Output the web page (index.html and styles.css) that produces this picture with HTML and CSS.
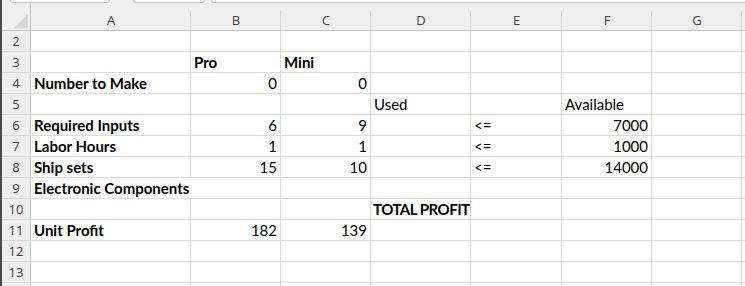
FILE: index.html
```html
<!DOCTYPE html>
<html>
<head>
<meta charset="utf-8">
<link rel="stylesheet" href="styles.css">
</head>
<body>
<div class="app">
  <div class="tabs">
    <div class="tab tab1"></div>
    <div class="tab tab2"></div>
    <div class="tab tab3"></div>
  </div>
  <div class="sheet">
    <div class="corner"><svg width="14" height="14" viewBox="0 0 14 14"><polygon points="14,0 0,14 14,14" fill="#d6d6d6"/></svg></div>
    <div class="colhead">A</div>
    <div class="colhead">B</div>
    <div class="colhead">C</div>
    <div class="colhead">D</div>
    <div class="colhead">E</div>
    <div class="colhead">F</div>
    <div class="colhead">G</div>
    <div class="colhead"></div>

    <div class="rowhead">2</div>
    <div class="cell"></div><div class="cell"></div><div class="cell"></div><div class="cell"></div><div class="cell"></div><div class="cell"></div><div class="cell"></div><div class="cell"></div>

    <div class="rowhead">3</div>
    <div class="cell"></div><div class="cell b">Pro</div><div class="cell b">Mini</div><div class="cell"></div><div class="cell"></div><div class="cell"></div><div class="cell"></div><div class="cell"></div>

    <div class="rowhead">4</div>
    <div class="cell b">Number to Make</div><div class="cell num">0</div><div class="cell num">0</div><div class="cell"></div><div class="cell"></div><div class="cell"></div><div class="cell"></div><div class="cell"></div>

    <div class="rowhead">5</div>
    <div class="cell"></div><div class="cell"></div><div class="cell"></div><div class="cell">Used</div><div class="cell"></div><div class="cell">Available</div><div class="cell"></div><div class="cell"></div>

    <div class="rowhead">6</div>
    <div class="cell b">Required Inputs</div><div class="cell num">6</div><div class="cell num">9</div><div class="cell"></div><div class="cell">&lt;=</div><div class="cell num">7000</div><div class="cell"></div><div class="cell"></div>

    <div class="rowhead">7</div>
    <div class="cell b">Labor Hours</div><div class="cell num">1</div><div class="cell num">1</div><div class="cell"></div><div class="cell">&lt;=</div><div class="cell num">1000</div><div class="cell"></div><div class="cell"></div>

    <div class="rowhead">8</div>
    <div class="cell b">Ship sets</div><div class="cell num">15</div><div class="cell num">10</div><div class="cell"></div><div class="cell">&lt;=</div><div class="cell num">14000</div><div class="cell"></div><div class="cell"></div>

    <div class="rowhead">9</div>
    <div class="cell b span2">Electronic Components</div><div class="cell"></div><div class="cell"></div><div class="cell"></div><div class="cell"></div><div class="cell"></div><div class="cell"></div>

    <div class="rowhead">10</div>
    <div class="cell"></div><div class="cell"></div><div class="cell"></div><div class="cell b tight">TOTAL PROFIT</div><div class="cell"></div><div class="cell"></div><div class="cell"></div><div class="cell"></div>

    <div class="rowhead">11</div>
    <div class="cell b">Unit Profit</div><div class="cell num">182</div><div class="cell num">139</div><div class="cell"></div><div class="cell"></div><div class="cell"></div><div class="cell"></div><div class="cell"></div>

    <div class="rowhead">12</div>
    <div class="cell"></div><div class="cell"></div><div class="cell"></div><div class="cell"></div><div class="cell"></div><div class="cell"></div><div class="cell"></div><div class="cell"></div>

    <div class="rowhead">13</div>
    <div class="cell"></div><div class="cell"></div><div class="cell"></div><div class="cell"></div><div class="cell"></div><div class="cell"></div><div class="cell"></div><div class="cell"></div>

    <div class="rowhead"></div>
    <div class="cell"></div><div class="cell"></div><div class="cell"></div><div class="cell"></div><div class="cell"></div><div class="cell"></div><div class="cell"></div><div class="cell"></div>
  </div>
</div>
</body>
</html>
```
FILE: styles.css
```css
* { box-sizing: border-box; }
html, body { margin: 0; padding: 0; background: #ffffff; }
body { width: 745px; height: 286px; overflow: hidden; }

.app {
  height: 286px;
  border-left: 2px solid #4b4b4b;
  background: #efefef;
  overflow: hidden;
  display: flex;
  flex-direction: column;
}

.tabs {
  height: 3px;
  display: flex;
  padding-left: 8px;
}
.tab {
  height: 3px;
  background: #ffffff;
  border: 1px solid #c4c4c4;
  border-top: none;
  border-radius: 0 0 3px 3px;
}
.tab1 { width: 100px; }
.tab2 { width: 72px; margin-left: 23px; }
.tab3 { flex: 1; margin-left: 6px; margin-right: -4px; }

.sheet {
  display: grid;
  grid-template-columns: 29px 160px 90px 90px 100px 91px 90px 90px 1fr;
  grid-template-rows: 28px repeat(13, 21px);
  font-family: "Lato", "Liberation Sans", sans-serif;
  font-size: 15px;
  color: #000;
}

.corner {
  background: #efefef;
  border-right: 1px solid #c2c2c2;
  border-bottom: 1px solid #c2c2c2;
  display: flex;
  justify-content: flex-end;
  align-items: flex-end;
  padding: 0 2px 2px 0;
}
.corner svg { display: block; }

.colhead {
  background: linear-gradient(#d8d8d8, #d8d8d8) right bottom / 1px 19px no-repeat, #efefef;
  border-bottom: 1px solid #c2c2c2;
  font-family: "Open Sans", "Noto Sans", sans-serif;
  font-size: 13px;
  color: #444;
  text-align: center;
  line-height: 20px;
  padding-top: 7px;
}

.rowhead {
  background: #efefef;
  border-right: 1px solid #c2c2c2;
  border-bottom: 1px solid #d8d8d8;
  font-family: "Open Sans", "Noto Sans", sans-serif;
  font-size: 13px;
  color: #444;
  text-align: center;
  line-height: 20px;
}

.cell {
  background: #ffffff;
  border-right: 1px solid #dadada;
  border-bottom: 1px solid #dadada;
  padding: 0 3px;
  line-height: 20px;
  white-space: nowrap;
  overflow: visible;
}
.b { font-weight: 700; }
.num { text-align: right; }
.span2 { grid-column: span 2; }
.tight { letter-spacing: -0.5px; padding-left: 2px; position: relative; z-index: 1; }
```
